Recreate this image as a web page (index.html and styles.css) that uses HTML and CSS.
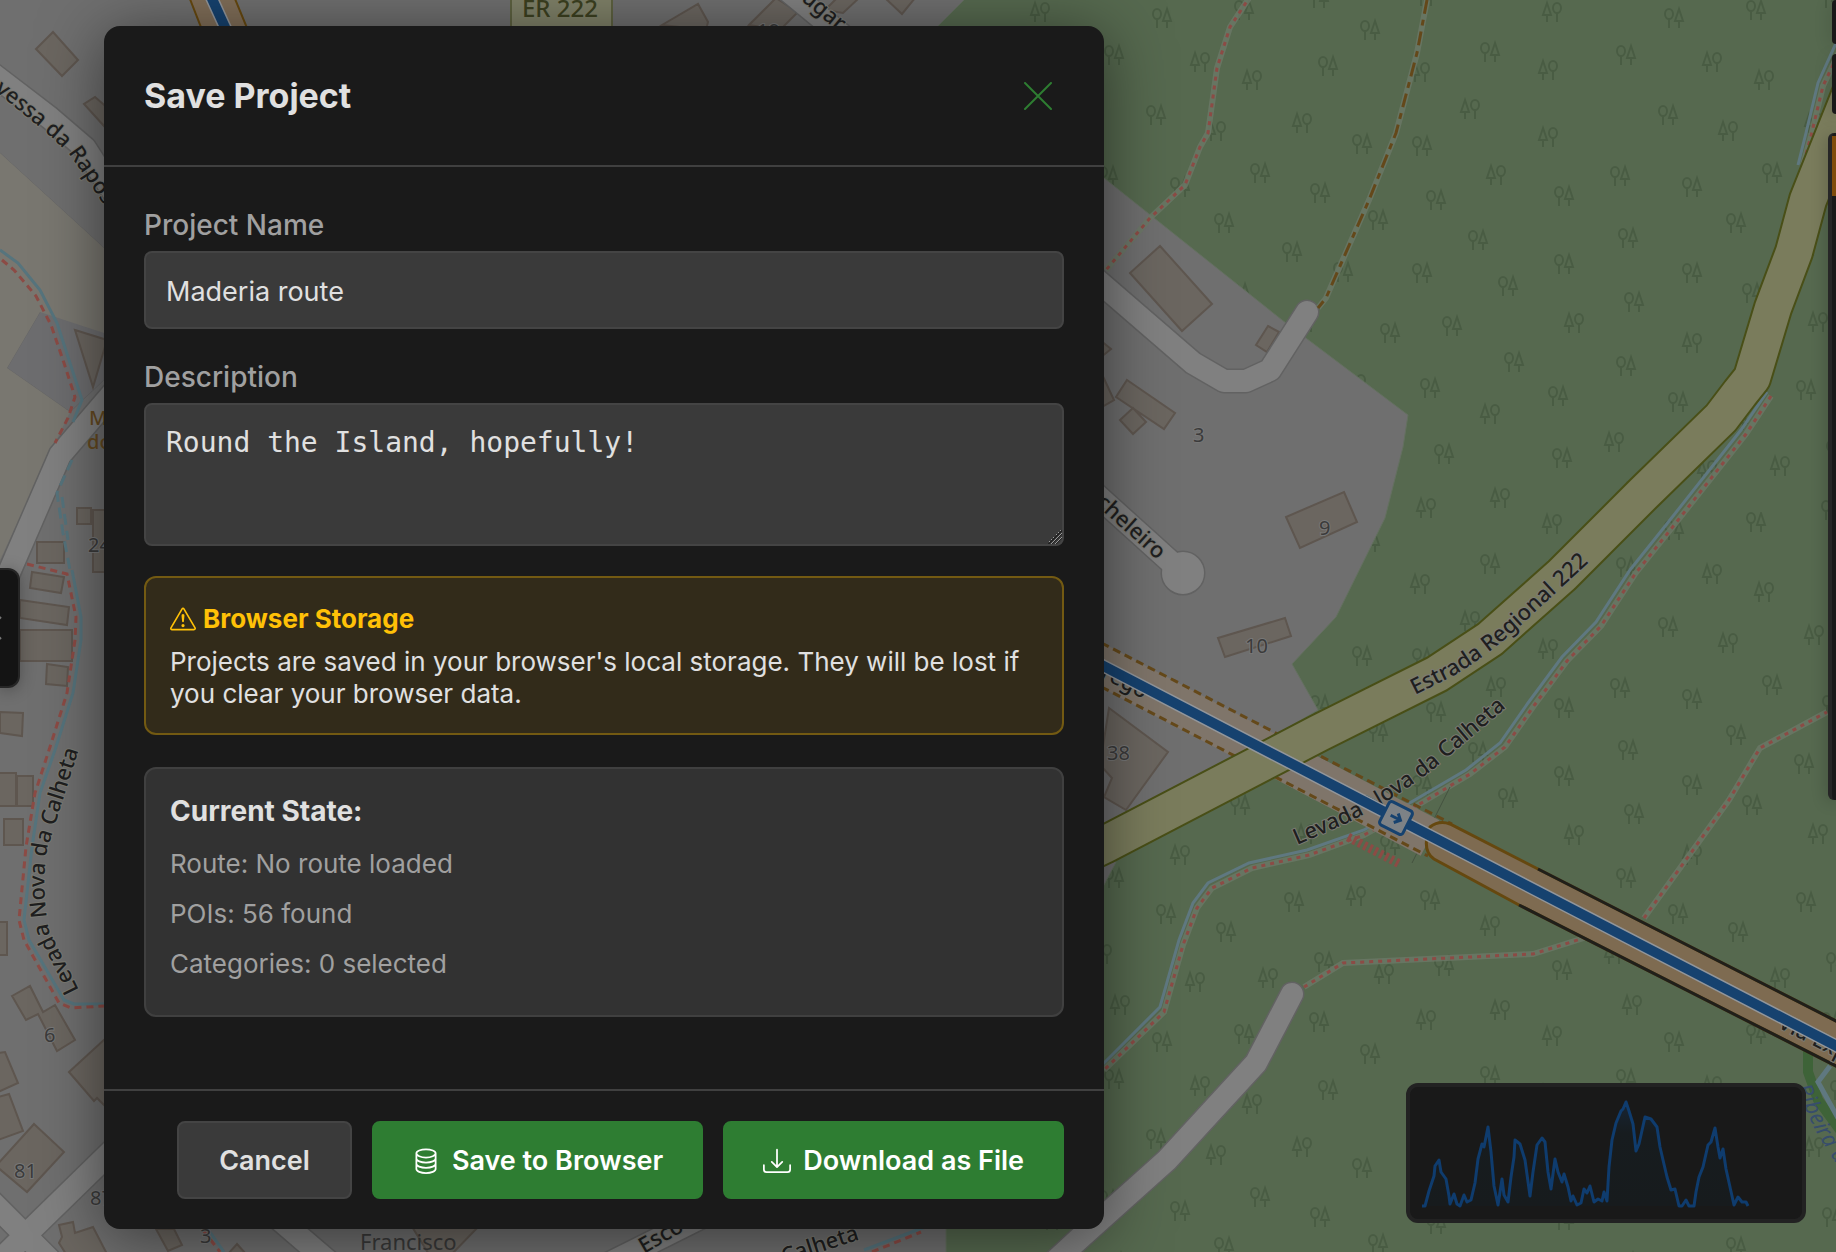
FILE: index.html
```
<!DOCTYPE html>
<html lang="en">
<head>
    <meta charset="UTF-8">
    <meta name="viewport" content="width=device-width, initial-scale=1.0">
    <title>Save Project</title>
    <link rel="stylesheet" href="styles.css">
</head>
<body>
    <!-- Map background -->
    <svg class="map" viewBox="0 0 1836 1252" preserveAspectRatio="xMinYMin slice" aria-hidden="true">
        <defs>
            <g id="ta">
                <ellipse cx="-5" cy="-4" rx="4" ry="5"/><path d="M-5 0V10M5 -9L1 3H9ZM5 3V10"/>
            </g>
            <g id="tb">
                <ellipse cx="5" cy="-4" rx="4" ry="5"/><path d="M5 0V10M-5 -9L-9 3H-1ZM-5 3V10"/>
            </g>
            <pattern id="woods" x="1080" y="0" width="512" height="512" patternUnits="userSpaceOnUse">
                <rect width="512" height="512" fill="#56694f"/>
                <g class="trees">
                    <use href="#ta" x="82" y="18"/><use href="#ta" x="164" y="10"/><use href="#ta" x="239" y="-2"/><use href="#ta" x="239" y="510"/>
                    <use href="#ta" x="290" y="30"/><use href="#ta" x="410" y="52"/><use href="#ta" x="34" y="55"/><use href="#ta" x="248" y="66"/>
                    <use href="#ta" x="76" y="115"/><use href="#ta" x="282" y="144"/><use href="#ta" x="342" y="146"/><use href="#ta" x="180" y="173"/>
                    <use href="#ta" x="28" y="176"/><use href="#ta" x="100" y="187"/><use href="#ta" x="240" y="193"/><use href="#ta" x="356" y="200"/>
                    <use href="#ta" x="484" y="196"/><use href="#ta" x="144" y="223"/><use href="#ta" x="212" y="252"/><use href="#ta" x="298" y="220"/>
                    <use href="#ta" x="398" y="240"/><use href="#ta" x="36" y="238"/><use href="#ta" x="263" y="272"/><use href="#ta" x="342" y="273"/>
                    <use href="#ta" x="428" y="286"/><use href="#ta" x="484" y="264"/><use href="#ta" x="100" y="273"/><use href="#ta" x="160" y="293"/>
                    <use href="#ta" x="310" y="333"/><use href="#ta" x="372" y="326"/><use href="#ta" x="42" y="302"/><use href="#ta" x="434" y="362"/>
                    <use href="#ta" x="34" y="366"/><use href="#ta" x="350" y="388"/><use href="#ta" x="478" y="396"/><use href="#ta" x="86" y="402"/>
                    <use href="#ta" x="214" y="390"/><use href="#ta" x="364" y="454"/><use href="#ta" x="482" y="458"/><use href="#ta" x="146" y="420"/>
                    <use href="#ta" x="244" y="450"/>
                    <use href="#tb" x="346" y="-4"/><use href="#tb" x="346" y="508"/><use href="#tb" x="472" y="12"/><use href="#tb" x="120" y="62"/>
                    <use href="#tb" x="172" y="80"/><use href="#tb" x="340" y="72"/><use href="#tb" x="468" y="70"/><use href="#tb" x="136" y="131"/>
                    <use href="#tb" x="222" y="123"/><use href="#tb" x="390" y="109"/><use href="#tb" x="468" y="137"/><use href="#tb" x="416" y="175"/>
                    <use href="#tb" x="494" y="323"/><use href="#tb" x="100" y="343"/><use href="#tb" x="226" y="322"/><use href="#tb" x="276" y="384"/>
                    <use href="#tb" x="410" y="414"/><use href="#tb" x="22" y="442"/><use href="#tb" x="420" y="498"/><use href="#tb" x="188" y="466"/>
                    <use href="#tb" x="115" y="470"/><use href="#tb" x="304" y="462"/><use href="#tb" x="40" y="493"/>
                </g>
            </pattern>
            <path id="lblRaposa" d="M-6 91L10 103L50 136L70 155L86 178L104 205L120 235"/>
            <path id="lblCheleiro" d="M1060 472L1104 512L1165 567"/>
            <path id="lblEstrada" d="M1415 695L1455 675Q1496 650 1535 612L1600 552"/>
            <path id="lblLevada" d="M1297 845L1345 824Q1390 802 1430 772L1520 696"/>
            <path id="lblLevadaLeft" d="M79 990L49 930Q41 890 47 850L77 755L83 730"/>
            <path id="lblLugar" d="M796 -4L840 33L880 66"/>
            <path id="lblRibeira" d="M1796 1088L1815 1130L1840 1170L1860 1200"/>
        </defs>

        <!-- Land use -->
        <rect width="1836" height="1252" fill="#6f6f6f"/>
        <path fill="#6d6d6f" stroke="#666" d="M0 153L104 248V380L70 412L7 368L40 312Z"/>
        <path fill="#797770" d="M0 153L104 248V333L40 312L7 368L70 412L55 443L0 560Z"/>
        <path fill="url(#woods)" stroke="#647060" d="M966 -2L938 26L1104 178L1282 320L1408 415L1403 447L1385 518L1336 617L1292 664L1318 710L1080 850L1116 862L1104 885L946 1150V1254H1838V-2Z"/>

        <!-- Buildings -->
        <g class="building">
            <path d="M53 32L78 60L62 76L36 49ZM95 97L110 110L104 126L84 104ZM75 330L107 340L93 387Z"/>
            <path d="M77 508h14v16h-14ZM93 510h20v62h-20ZM37 542h27v21h-27ZM32 572L64 577L61 593L30 588ZM20 600L69 607L67 625L20 618ZM20 630h52v31h-52ZM47 664L68 667L67 686L46 684ZM0 712L23 713L22 736L0 733Z"/>
            <path d="M-2 773h18v33h-18ZM17 776h16v30h-16ZM4 819h19v26h-19ZM-2 922h9v33h-9Z"/>
            <path d="M12 996L30 986L43 1012L55 1005L75 1040L57 1051L38 1014L26 1020ZM69 1072L106 1038V1107L97 1098L94 1101ZM-2 1053L5 1052L18 1083L-2 1092ZM-2 1097L9 1094L23 1131L-2 1140ZM34 1124L64 1152L27 1192L-4 1166Z"/>
            <path d="M59 1225L73 1222L75 1233L93 1227L107 1254H66L59 1243L62 1237ZM156 1229H174L182 1245L168 1251ZM237 1244L246 1254H228ZM411 1225H480L450 1256H430Z"/>
            <path d="M662 25L698 4L708 22L706 30ZM749 25L776 -2L798 12L780 30ZM837 -2H859L843 13L825 10ZM885 -2H915L902 14Z"/>
            <path d="M1160 246L1212 304L1182 331L1130 273ZM1268 326L1279 332L1267 352L1256 345ZM1127 380L1175 413L1164 429L1116 397ZM1133 408L1146 422L1133 434L1120 420ZM1100 370L1114 400L1100 408ZM1100 340L1111 349L1100 358Z"/>
            <path d="M1344 492L1357 522L1300 548L1286 517ZM1285 618L1291 636L1225 657L1218 638ZM1109 708L1168 752L1126 810L1104 797L1112 778L1100 765Z"/>
        </g>

        <!-- Minor streets -->
        <g class="street-case">
            <path d="M-10 72L50 118L85 148L125 210M120 385L60 455L8 575M120 1143L0 1260M-10 1200L50 1260M280 1220L350 1280M600 1268L720 1208M770 -24L860 50"/>
            <path d="M1090 274L1193 363L1224 381H1246L1270 370L1307 312M1090 489L1183 573M1292 994L1256 1063L1167 1160L1080 1238L1040 1275"/>
            <circle cx="1183" cy="573" r="10"/>
        </g>
        <g class="street">
            <path d="M-10 72L50 118L85 148L125 210M120 385L60 455L8 575M120 1143L0 1260M-10 1200L50 1260M280 1220L350 1280M600 1268L720 1208M770 -24L860 50"/>
            <path d="M1090 274L1193 363L1224 381H1246L1270 370L1307 312M1090 489L1183 573M1292 994L1256 1063L1167 1160L1080 1238L1040 1275"/>
            <circle cx="1183" cy="573" r="10"/>
        </g>

        <!-- Water and footpaths -->
        <g class="stream-left">
            <path d="M0 250L18 263L40 290L57 323L69 360L82 400L73 422"/>
            <path stroke-dasharray="11 6" d="M72 460L57 493L63 533L70 570M62 497L68 540"/>
            <path d="M72 570L81 617V640L73 693L55 750L40 793L32 847L24 920L29 940L64 1000L74 1004H104M205 1225L224 1252M864 1250L925 1227"/>
        </g>
        <g class="stream">
            <path d="M1836 43L1818 83L1806 133L1798 165M1767 392L1741 430L1666 525L1630 570L1596 622L1562 657L1528 703L1500 743L1466 770L1413 801L1364 830L1307 850L1249 863L1208 883L1193 903L1179 940L1160 1007L1100 1067"/>
            <path stroke="#3e6338" stroke-width="10" d="M1808 1040V1072L1818 1100L1840 1130"/>
            <path stroke-width="5" d="M1830 1066L1818 1082L1838 1118"/>
        </g>
        <g class="path-case">
            <path d="M1251 -5L1230 27L1217 68L1208 133L1200 147L1185 185L1150 218L1106 270M1427 0L1417 53L1396 133L1369 200L1326 298L1318 308"/>
            <path d="M1841 48L1823 86L1811 136L1803 165M1771 396L1746 434L1671 529L1635 574L1601 626L1567 661L1533 707L1505 747L1470 774L1418 805L1364 835L1309 855L1252 868L1212 888L1197 908L1183 945L1164 1012L1104 1070"/>
            <path d="M1304 987L1343 963L1533 954L1584 938M1644 918L1729 800L1760 748L1827 712"/>
        </g>
        <g class="path-red">
            <path d="M1251 -5L1230 27L1217 68L1208 133L1200 147L1185 185L1150 218L1106 270"/>
            <path d="M1841 48L1823 86L1811 136L1803 165M1771 396L1746 434L1671 529L1635 574L1601 626L1567 661L1533 707L1505 747L1470 774L1418 805L1364 835L1309 855L1252 868L1212 888L1197 908L1183 945L1164 1012L1104 1070"/>
            <path d="M1304 987L1343 963L1533 954L1584 938M1644 918L1729 800L1760 748L1827 712"/>
            <path class="path-left" d="M2 260L14 270L36 296L51 325L63 360L75 397L68 418L55 443M27 564L67 574L76 617L75 640L67 693L50 747L35 793L26 847L19 920L24 940L59 1003L71 1008L104 1006M203 1230L220 1252M872 1252L921 1232"/>
            <path class="steps" d="M1348 837L1400 864"/>
        </g>
        <path class="track" d="M1427 0L1417 53L1396 133L1369 200L1326 298L1318 308"/>
        <path stroke="#44523f" stroke-width="1" fill="none" d="M1412 863L1450 787"/>

        <!-- Main roads -->
        <path stroke="#7f756a" stroke-width="40" fill="none" d="M1090 659L1430 838"/>
        <path class="tunnel-edge" d="M1090 637L1452 824M1090 681L1428 856"/>
        <path stroke="#494f17" stroke-width="40" fill="none" stroke-linejoin="round" d="M1060 866L1104 845L1319 733L1437 674L1490 639L1562 575L1644 493L1721 418L1740 393L1752 378L1773 308L1794 252L1808 200L1852 90"/>
        <path stroke="#7a7c5c" stroke-width="36" fill="none" stroke-linejoin="round" d="M1060 866L1104 845L1319 733L1437 674L1490 639L1562 575L1644 493L1721 418L1740 393L1752 378L1773 308L1794 252L1808 200L1852 90"/>
        <path fill="#7e6b51" stroke="#66480f" stroke-width="3" d="M1840 1023L1538 869L1450 824Q1439 820 1430 827Q1421 850 1434 859L1519 905L1840 1068"/>
        <path fill="none" stroke="#201f1a" stroke-width="3" d="M1840 1023L1538 869M1519 905L1840 1068"/>
        <path fill="#806e58" stroke="#66480f" stroke-width="2" d="M188 -6L206 40H252L233 -6Z"/>

        <!-- Labels -->
        <g class="road-label">
            <text><textPath href="#lblRaposa">vessa da Raposeira</textPath></text>
            <text><textPath href="#lblCheleiro" startOffset="20">Cocheleiro</textPath></text>
            <text><textPath href="#lblEstrada">Estrada Regional 222</textPath></text>
            <text><textPath href="#lblLevada">Levada Nova da Calheta</textPath></text>
            <text><textPath href="#lblLevadaLeft">Levada Nova da Calheta</textPath></text>
            <text><textPath href="#lblLugar">lugar</textPath></text>
            <text transform="translate(1100 677) rotate(27)">rego</text>
            <text transform="translate(1777 1027) rotate(27)">Via Exp</text>
            <text transform="translate(644 1254) rotate(-30)">Esco</text>
            <text transform="translate(784 1264) rotate(-18)">Calheta</text>
        </g>
        <text class="water-label"><textPath href="#lblRibeira">Ribeira da</textPath></text>
        <g class="house-label">
            <text x="1193" y="442">3</text><text x="1319" y="535">9</text><text x="1245" y="653">10</text><text x="1107" y="760">38</text>
            <text x="88" y="552">24</text><text x="44" y="1042">6</text><text x="14" y="1178">81</text><text x="90" y="1205">87</text>
            <text x="200" y="1243">3</text><text x="757" y="38">19</text>
        </g>
        <text class="place-label" x="360" y="1250">Francisco</text>
        <g class="poi-label"><text x="89" y="425">M</text><text x="87" y="449">do</text></g>
        <rect x="511" y="-10" width="101" height="50" fill="#7f8168" stroke="#5d6140" stroke-width="2"/>
        <text class="shield-label" x="522" y="17">ER 222</text>

        <!-- Route line -->
        <path stroke="#92969b" stroke-width="13" fill="none" d="M208 -10L240 60M1090 659L1396 818L1850 1053"/>
        <path stroke="#16426f" stroke-width="10" fill="none" d="M208 -10L240 60M1090 659L1396 818L1850 1053"/>
        <g transform="translate(1396 818) rotate(27)">
            <rect x="-13" y="-13" width="26" height="26" rx="3" fill="#7d8286" stroke="#16426f" stroke-width="3"/>
            <path d="M-6 0H5M0 -5L5 0L0 5" fill="none" stroke="#16426f" stroke-width="3"/>
        </g>
    </svg>

    <!-- Controls behind the dialog -->
    <div class="side-toggle">
        <svg viewBox="0 0 14 24" aria-hidden="true"><path d="M13 1L2 12L13 23"/></svg>
    </div>
    <div class="side-panel panel-top"></div>
    <div class="side-panel panel-mid"></div>
    <div class="side-panel panel-list"><div class="panel-active"></div></div>

    <div class="elevation">
        <svg viewBox="0 0 392 132" aria-hidden="true">
            <defs>
                <linearGradient id="fade" x1="0" y1="0" x2="0" y2="1">
                    <stop offset="0" stop-color="#172535"/>
                    <stop offset="0.3" stop-color="#171c1f"/>
                    <stop offset="1" stop-color="#171b1d"/>
                </linearGradient>
            </defs>
            <path fill="url(#fade)" stroke="#0f3c6e" stroke-width="3" stroke-linejoin="round" d="M12 119H15L19 104L24 89L25 79L29 73L31 85L36 92L39 109L40 117L44 107L47 117L50 119L54 108L57 115L61 113L65 96L68 72L72 57L74 60L78 40L81 65L84 99L88 118L92 92L94 108L98 115L101 90L104 70L105 53L110 57L115 73L120 109L123 85L127 58L132 51L135 55L138 85L141 102L145 72L148 85L152 95L154 87L158 100L161 114L163 109L167 118L171 116L174 102L177 106L180 99L184 115L188 112L192 114L194 105L197 114L199 80L202 53L206 36L211 24L213 22L216 15L219 24L223 37L226 64L229 57L235 30L241 32L247 40L250 60L253 73L257 90L261 103L265 102L269 119H272L276 113L279 119H284L286 105L289 90L293 80L298 58L301 55L305 41L308 60L310 71L313 62L316 82L320 100L324 118L328 110L332 115H336L338 119"/>
        </svg>
    </div>

    <div class="overlay">
        <form class="modal" role="dialog" aria-labelledby="modalTitle">
            <header class="modal-header">
                <h2 id="modalTitle">Save Project</h2>
                <button type="button" class="btn-close" aria-label="Close">
                    <svg viewBox="0 0 28 28" aria-hidden="true"><path d="M1 1L27 27M27 1L1 27"/></svg>
                </button>
            </header>

            <div class="modal-body">
                <div class="form-group">
                    <label for="projectName">Project Name</label>
                    <input type="text" id="projectName" value="Maderia route">
                </div>
                <div class="form-group">
                    <label for="projectDescription">Description</label>
                    <textarea id="projectDescription" rows="3">Round the Island, hopefully!</textarea>
                </div>

                <div class="storage-warning">
                    <strong>
                        <svg viewBox="0 0 16 16" aria-hidden="true">
                            <path d="M7.938 2.016A.13.13 0 0 1 8.002 2a.13.13 0 0 1 .063.016.15.15 0 0 1 .054.057l6.857 11.667c.036.06.035.124.002.183a.2.2 0 0 1-.054.06.1.1 0 0 1-.066.017H1.146a.1.1 0 0 1-.066-.017.2.2 0 0 1-.054-.06.18.18 0 0 1 .002-.183L7.884 2.073a.15.15 0 0 1 .054-.057m1.044-.45a1.13 1.13 0 0 0-1.96 0L.165 13.233c-.457.778.091 1.767.98 1.767h13.713c.889 0 1.438-.99.98-1.767z"/>
                            <path d="M7.002 12a1 1 0 1 1 2 0 1 1 0 0 1-2 0M7.1 5.995a.905.905 0 1 1 1.8 0l-.35 3.507a.552.552 0 0 1-1.1 0z"/>
                        </svg>
                        Browser Storage
                    </strong>
                    <p>Projects are saved in your browser's local storage. They will be lost if you clear your browser data.</p>
                </div>

                <div class="current-state">
                    <h3>Current State:</h3>
                    <ul>
                        <li>Route: No route loaded</li>
                        <li>POIs: 56 found</li>
                        <li>Categories: 0 selected</li>
                    </ul>
                </div>
            </div>

            <footer class="modal-footer">
                <button type="button" class="btn btn-secondary">Cancel</button>
                <button type="button" class="btn btn-primary">
                    <svg viewBox="0 0 16 16" aria-hidden="true">
                        <path class="line" d="M2.5 3.6C2.5 2.3 5 1.3 8 1.3S13.5 2.3 13.5 3.6 11 6 8 6 2.5 4.9 2.5 3.6ZM2.5 3.6V12.6C2.5 13.9 5 14.9 8 14.9S13.5 13.9 13.5 12.6V3.6M2.5 6.6C2.5 7.9 5 8.9 8 8.9S13.5 7.9 13.5 6.6M2.5 9.6C2.5 10.9 5 11.9 8 11.9S13.5 10.9 13.5 9.6"/>
                    </svg>
                    Save to Browser
                </button>
                <button type="button" class="btn btn-primary">
                    <svg viewBox="0 0 16 16" aria-hidden="true">
                        <path d="M.5 9.9a.5.5 0 0 1 .5.5v2.5a1 1 0 0 0 1 1h12a1 1 0 0 0 1-1v-2.5a.5.5 0 0 1 1 0v2.5a2 2 0 0 1-2 2H2a2 2 0 0 1-2-2v-2.5a.5.5 0 0 1 .5-.5"/>
                        <path d="M7.646 11.854a.5.5 0 0 0 .708 0l3-3a.5.5 0 0 0-.708-.708L8.5 10.293V1.5a.5.5 0 0 0-1 0v8.793L5.354 8.146a.5.5 0 1 0-.708.708z"/>
                    </svg>
                    Download as File
                </button>
            </footer>
        </form>
    </div>
</body>
</html>
```
FILE: styles.css
```
* {
    box-sizing: border-box;
}

body {
    margin: 0;
    min-height: 100vh;
    overflow: hidden;
    font-family: Inter, "Liberation Sans", sans-serif;
    background-color: #6f6f6f;
    color: #e0e0e0;
}

/* Map */
.map {
    position: absolute;
    top: 0;
    left: 0;
    width: 100%;
    height: 100%;
}

.trees {
    fill: none;
    stroke: #495c43;
    stroke-width: 2;
}

.building {
    fill: #6b6660;
    stroke: #5e564f;
    stroke-width: 2;
}

.street, .street-case {
    fill: none;
    stroke-linecap: round;
    stroke-linejoin: round;
}

.street {
    stroke: #808080;
    stroke-width: 22;
}

.street-case {
    stroke: #626262;
    stroke-width: 25;
}

.stream, .stream-left {
    fill: none;
    stroke: #5f7880;
    stroke-width: 3;
}

.stream-left {
    stroke: #56747d;
}

.path-case {
    fill: none;
    stroke: #6c7867;
    stroke-width: 6;
    opacity: 0.8;
}

.path-red {
    fill: none;
    stroke: #8c4b45;
    stroke-width: 3;
    stroke-dasharray: 4 5;
}

.path-left {
    stroke-dasharray: 7 5;
}

.steps {
    stroke-width: 9;
    stroke-dasharray: 3 3;
}

.track {
    fill: none;
    stroke: #64481a;
    stroke-width: 3;
    stroke-dasharray: 14 6 6 6;
}

.tunnel-edge {
    fill: none;
    stroke: #65491a;
    stroke-width: 3;
    stroke-dasharray: 8 5;
}

.road-label, .house-label, .place-label, .poi-label, .shield-label, .water-label {
    font-family: "Noto Sans", sans-serif;
    font-size: 22px;
    fill: #1f1f1f;
}

.road-label {
    font-weight: 500;
    paint-order: stroke;
    stroke: #7b7b74;
    stroke-width: 2;
}

.house-label {
    font-size: 20px;
    fill: #3b3b3b;
    paint-order: stroke;
    stroke: #777;
    stroke-width: 2;
}

.place-label {
    fill: #393939;
}

.poi-label {
    font-size: 20px;
    font-weight: 500;
    fill: #654a20;
}

.shield-label {
    font-size: 24px;
    font-weight: 500;
    fill: #3c4020;
}

.water-label {
    fill: #374d6c;
    font-style: italic;
}

/* Controls around the map */
.side-toggle {
    position: absolute;
    top: 568px;
    left: 0;
    display: flex;
    align-items: center;
    width: 20px;
    height: 120px;
    background-color: #141414;
    border: 2px solid #262626;
    border-left: 0;
    border-radius: 0 12px 12px 0;
    box-shadow: 0 2px 16px rgba(0, 0, 0, 0.3);
}

.side-toggle svg {
    flex-shrink: 0;
    width: 14px;
    height: 24px;
    margin-left: -12px;
    fill: none;
    stroke: #777;
    stroke-width: 2;
}

.side-panel {
    position: absolute;
    right: 0;
    width: 4px;
    background-color: #191919;
    border-radius: 6px 0 0 6px;
    box-shadow: 0 2px 16px rgba(0, 0, 0, 0.3);
}

.panel-top {
    top: 0;
    height: 44px;
}

.panel-mid {
    top: 54px;
    height: 60px;
}

.panel-list {
    top: 133px;
    width: 8px;
    height: 667px;
    padding-top: 3px;
    border-left: 4px solid #262626;
}

.panel-active {
    height: 60px;
    background-color: #7f4c0c;
}

.elevation {
    position: absolute;
    right: 30px;
    bottom: 29px;
    width: 400px;
    height: 140px;
    background-color: #191919;
    border: 4px solid #222;
    border-radius: 12px;
}

.elevation svg {
    display: block;
    width: 100%;
}

/* Modal */
.overlay {
    position: absolute;
    top: 0;
    left: 0;
    width: 100%;
    padding: 26px 104px;
}

.modal {
    max-width: 1000px;
    background-color: #1a1a1a;
    border-radius: 16px;
    box-shadow: 0 8px 64px rgba(0, 0, 0, 0.5);
}

.modal-header {
    display: flex;
    justify-content: space-between;
    align-items: center;
    padding: 40px;
    border-bottom: 2px solid #404040;
}

.modal-header h2 {
    margin: 0;
    font-size: 34px;
    font-weight: 700;
    line-height: 59px;
}

.btn-close {
    display: flex;
    padding: 0 12px;
    background: none;
    border: none;
    cursor: pointer;
}

.btn-close svg {
    width: 28px;
    height: 28px;
    fill: none;
    stroke: #2e7d32;
    stroke-width: 2;
    stroke-linecap: round;
}

.modal-body {
    padding: 40px;
}

.form-group {
    margin-bottom: 30px;
}

.form-group label {
    display: block;
    margin-bottom: 8px;
    font-size: 28px;
    font-weight: 500;
    line-height: 36px;
    color: #a0a0a0;
}

.form-group input, .form-group textarea {
    display: block;
    width: 100%;
    padding: 21px 20px 19px;
    background-color: #3a3a3a;
    border: 2px solid #444;
    border-radius: 8px;
    color: #e0e0e0;
}

.form-group input {
    height: 78px;
    font-family: inherit;
    font-size: 27px;
    line-height: 34px;
}

.form-group textarea {
    height: 143px;
    font-family: "DejaVu Sans Mono", monospace;
    font-size: 28px;
    line-height: 33px;
    resize: vertical;
}

.form-group textarea::-webkit-scrollbar {
    width: 28px;
    height: 28px;
}

.form-group textarea::-webkit-resizer {
    background: linear-gradient(135deg, transparent 50%, #999 50% 53%, #222 53% 57%, transparent 57% 63%, #999 63% 66%, #222 66% 70%, transparent 70% 76%, #999 76% 79%, #222 79% 83%, transparent 83%);
}

.storage-warning {
    margin-bottom: 32px;
    padding: 24px;
    background-color: #322b1a;
    border: 2px solid #735a12;
    border-radius: 12px;
    font-size: 26px;
}

.storage-warning strong {
    display: flex;
    align-items: center;
    gap: 7px;
    margin-bottom: 10px;
    line-height: 34px;
    color: #ffc107;
}

.storage-warning svg {
    width: 26px;
    height: 26px;
    fill: currentColor;
}

.storage-warning p {
    margin: 0 0 -1px;
    line-height: 32px;
}

.current-state {
    margin-bottom: 32px;
    padding: 24px 24px 34px;
    background-color: #323232;
    border: 2px solid #404040;
    border-radius: 12px;
    font-size: 26px;
}

.current-state h3 {
    margin: 0 0 18px;
    font-size: 28px;
    line-height: 36px;
}

.current-state ul {
    display: flex;
    flex-direction: column;
    gap: 16px;
    margin: 0;
    padding: 0;
    list-style: none;
    line-height: 34px;
    color: #a0a0a0;
}

.modal-footer {
    display: flex;
    justify-content: flex-end;
    gap: 20px;
    padding: 30px 40px;
    border-top: 2px solid #404040;
}

.btn {
    display: flex;
    align-items: center;
    gap: 12px;
    padding: 21px 38px 19px;
    border: 2px solid transparent;
    border-radius: 8px;
    font-family: inherit;
    font-size: 27px;
    font-weight: 600;
    line-height: 34px;
    cursor: pointer;
}

.btn svg {
    width: 28px;
    height: 28px;
    fill: currentColor;
}

.btn .line {
    fill: none;
    stroke: currentColor;
}

.btn-secondary {
    padding: 21px 40px 19px;
    background-color: #3a3a3a;
    border-color: #444;
    color: #e0e0e0;
}

.btn-primary {
    background-color: #2e7d32;
    border-color: #2e7d32;
    color: #fff;
}
```
